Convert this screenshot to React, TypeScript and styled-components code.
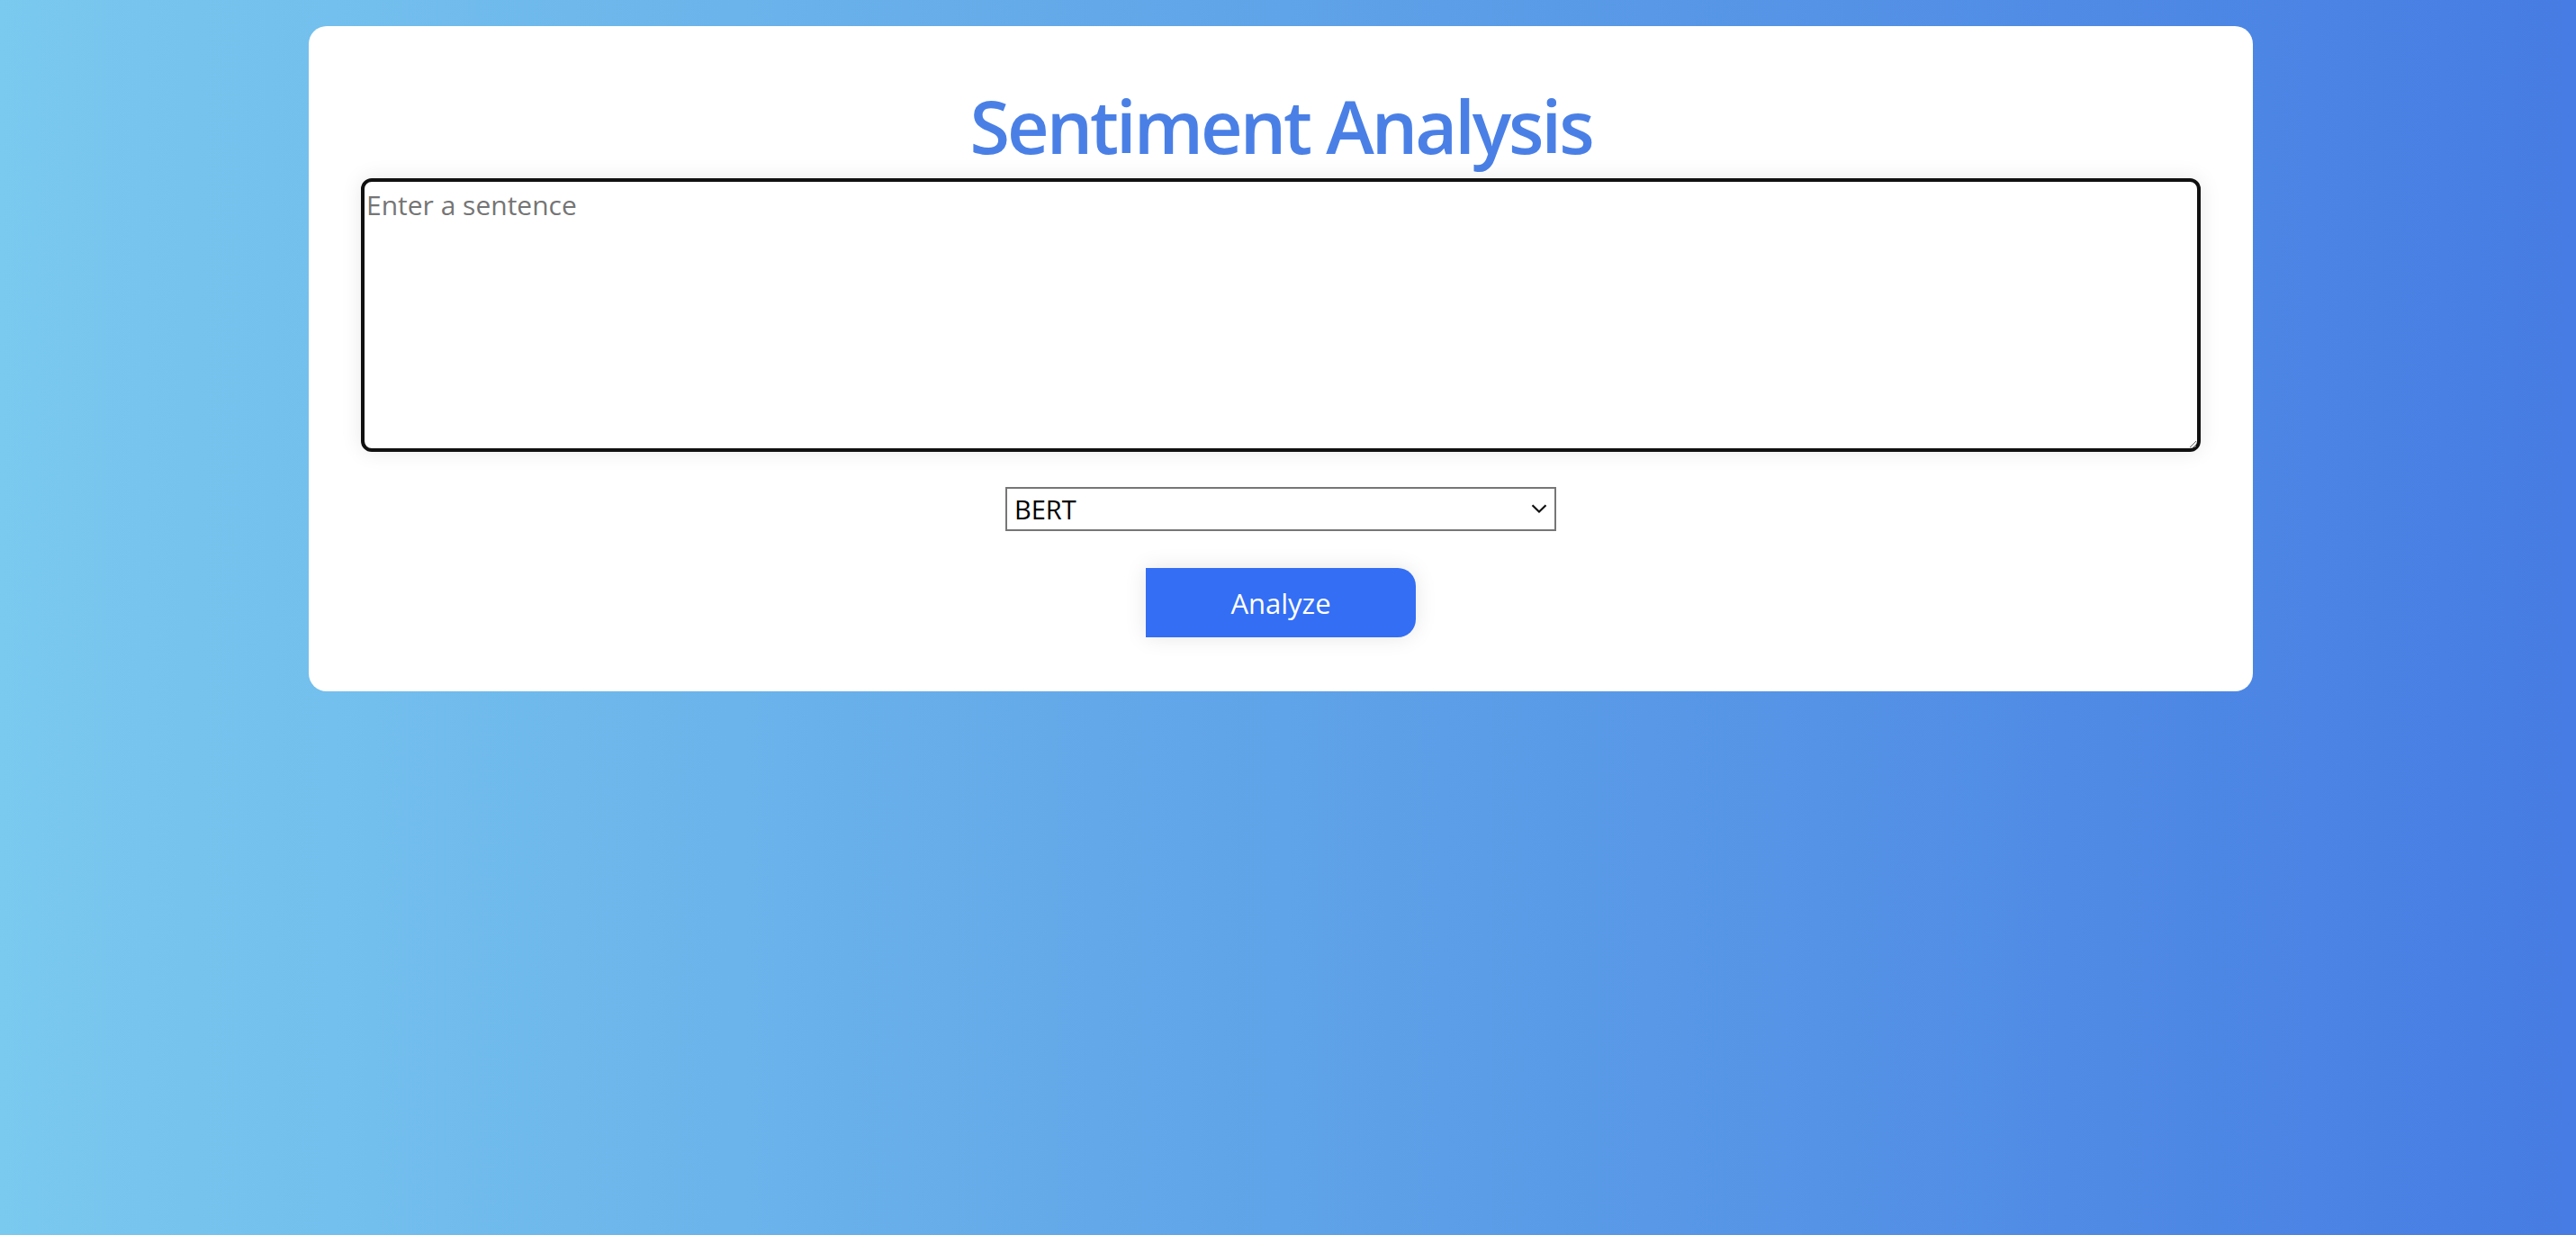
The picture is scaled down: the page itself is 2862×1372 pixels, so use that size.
import styled, { createGlobalStyle } from "styled-components";

const GlobalStyle = createGlobalStyle`
  html, body {
    margin: 0;
    padding: 0;
  }
  body {
    min-height: 100vh;
    background: linear-gradient(90deg, #7ac9ef 0%, #5fa3e8 50%, #467ce3 100%);
    font-family: "Open Sans", "Noto Sans", sans-serif;
  }
`;

export default function App() {
  return (
    <>
      <GlobalStyle />
      <Page>
        <Card>
          <Title>Sentiment Analysis</Title>
          <SentenceInput placeholder="Enter a sentence" />
          <SelectWrap>
            <ModelSelect defaultValue="BERT">
              <option value="BERT">BERT</option>
              <option value="LSTM">LSTM</option>
              <option value="NaiveBayes">Naive Bayes</option>
            </ModelSelect>
            <Chevron viewBox="0 0 18 10" aria-hidden="true">
              <path d="M1.5 1.2 L9 8.5 L16.5 1.2" fill="none" stroke="#111" strokeWidth="2.2" />
            </Chevron>
          </SelectWrap>
          <AnalyzeButton>Analyze</AnalyzeButton>
        </Card>
      </Page>
    </>
  );
}

const Page = styled.main`
  min-height: 100vh;
  box-sizing: border-box;
  display: flex;
  justify-content: center;
  align-items: flex-start;
  padding: 29px 16px 0 0;
`;

const Card = styled.section`
  width: 2160px;
  box-sizing: border-box;
  background: #ffffff;
  border-radius: 20px;
  padding: 61px 58px 60px;
  display: flex;
  flex-direction: column;
  align-items: center;
`;

const Title = styled.h1`
  margin: 0 0 8px;
  font-size: 81px;
  line-height: 100px;
  font-weight: 600;
  letter-spacing: -3px;
  color: #4a80e6;
`;

const SentenceInput = styled.textarea`
  width: 100%;
  height: 304px;
  box-sizing: border-box;
  border: 4px solid #111111;
  border-radius: 12px;
  padding: 5px 2px;
  font-family: "Open Sans", sans-serif;
  font-size: 30px;
  color: #222;
  box-shadow: 0 0 24px rgba(0, 0, 0, 0.09);
  outline: none;

  &::placeholder {
    color: #757575;
  }
`;

const SelectWrap = styled.div`
  position: relative;
  margin-top: 39px;
  width: 612px;
  height: 49px;
`;

const ModelSelect = styled.select`
  appearance: none;
  width: 100%;
  height: 100%;
  box-sizing: border-box;
  border: 2px solid #767676;
  border-radius: 0;
  background: #ffffff;
  padding: 0 40px 0 8px;
  font-family: "Open Sans", sans-serif;
  font-size: 29px;
  color: #000;
`;

const Chevron = styled.svg`
  position: absolute;
  right: 10px;
  top: 19px;
  width: 18px;
  height: 10px;
  pointer-events: none;
`;

const AnalyzeButton = styled.button`
  margin-top: 41px;
  width: 300px;
  height: 77px;
  border: none;
  border-radius: 0 20px 20px 0;
  background: #336ef4;
  color: #ffffff;
  font-family: "Open Sans", sans-serif;
  font-size: 31px;
  box-shadow: 0 0 24px rgba(0, 0, 0, 0.1);
  cursor: pointer;
`;
